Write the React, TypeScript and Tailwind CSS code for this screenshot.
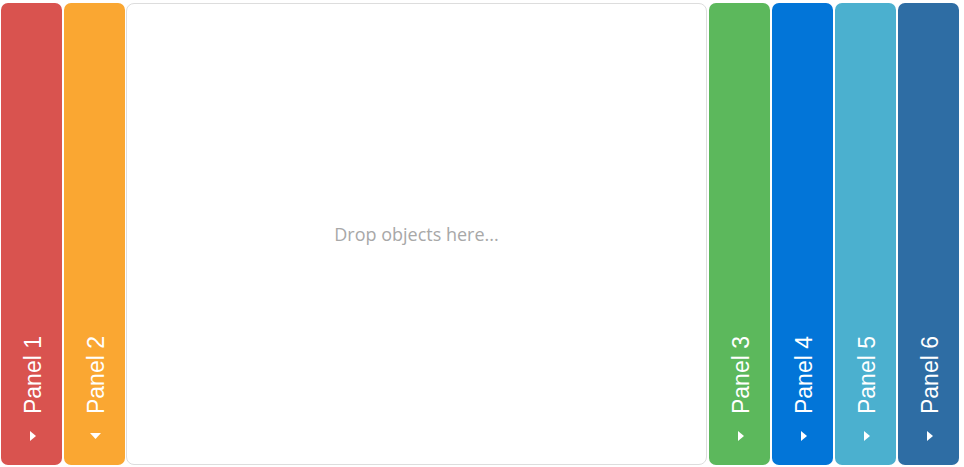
import React from "react";

type P = { label: string; color: string; open?: boolean };

function Panel({ label, color, open }: P) {
  return (
    <div
      className={`w-[61px] h-[462px] rounded-[7px] ${color} flex flex-col items-center justify-end pb-[24px] shrink-0`}
    >
      <div
        className="[writing-mode:vertical-rl] rotate-180 text-white text-[23px] leading-[24px] ml-[3px]"
        style={{ fontFamily: '"Liberation Sans", Arial, sans-serif' }}
      >
        {label}
      </div>
      <div className="mt-[17px] h-[10px] flex items-center justify-center ml-[2px]">
        {open ? (
          <svg width="11" height="7" viewBox="0 0 11 7">
            <polygon points="0,0 11,0 5.5,6" fill="white" />
          </svg>
        ) : (
          <svg width="6" height="10" viewBox="0 0 6 10">
            <polygon points="0,0 6,5 0,10" fill="white" />
          </svg>
        )}
      </div>
    </div>
  );
}

export default function App() {
  return (
    <div className="w-[964px] h-[467px] bg-white pt-[3px] pl-[1px] flex gap-[2px]">
      <Panel label="Panel 1" color="bg-[#d9534f]" />
      <Panel label="Panel 2" color="bg-[#faa732]" open />
      <div className="w-[581px] h-[462px] -ml-[1px] border border-[#dddddd] rounded-[8px] flex items-center justify-center shrink-0">
        <span
          className="text-[#a8a8a8] text-[18px]"
          style={{ fontFamily: '"Open Sans", sans-serif' }}
        >
          Drop objects here...
        </span>
      </div>
      <Panel label="Panel 3" color="bg-[#5cb85c]" />
      <Panel label="Panel 4" color="bg-[#0275d8]" />
      <Panel label="Panel 5" color="bg-[#4bb0cf]" />
      <Panel label="Panel 6" color="bg-[#2e6da4]" />
    </div>
  );
}
